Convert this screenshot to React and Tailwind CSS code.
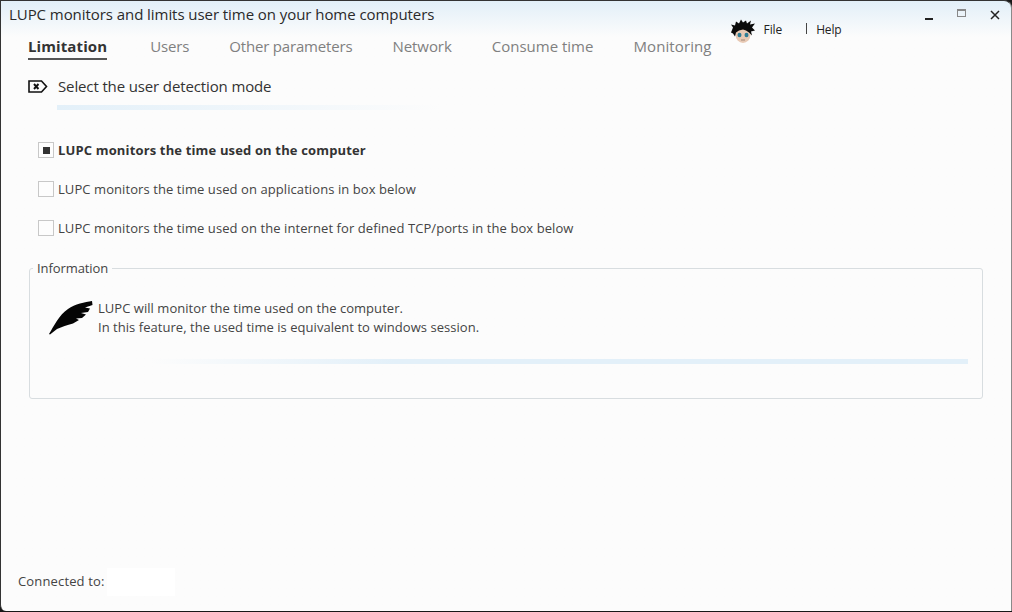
const tabs = [
  { label: 'Users', cls: 'ml-[43px] tracking-[-0.14px]' },
  { label: 'Other parameters', cls: 'ml-[40px] tracking-[-0.18px]' },
  { label: 'Network', cls: 'ml-[40px] tracking-[-0.05px]' },
  { label: 'Consume time', cls: 'ml-[40px] tracking-[0px]' },
  { label: 'Monitoring', cls: 'ml-[40px] tracking-[0.1px]' },
];

function Avatar() {
  return (
    <svg width="26" height="26" viewBox="0 0 26 25" className="shrink-0">
      <ellipse cx="13" cy="15" rx="7.5" ry="8.5" fill="#e8c9b4" />
      <path d="M1 13 L3 8 L1 5 L5 6 L6 2 L9 4 L11 0 L13 3 L16 1 L17 4 L21 1 L20 5 L25 4 L22 8 L25 11 L21 12 L22 16 L19 13 L16 11 L13 10 L9 11 L6 13 L5 17 L3 14 Z" fill="#0b0b0b" />
      <ellipse cx="9.5" cy="15.5" rx="2" ry="2.2" fill="#2f7d95" />
      <ellipse cx="16.5" cy="15.5" rx="2" ry="2.2" fill="#2f7d95" />
      <path d="M11 20.5 H15" stroke="#a08878" strokeWidth="1" />
    </svg>
  );
}

function TagIcon() {
  return (
    <svg width="20" height="13" viewBox="0 0 20 13" className="shrink-0">
      <path d="M1 1 H13.5 L18.5 6.5 L13.5 12 H1 Z" fill="none" stroke="#111" strokeWidth="1.6" />
      <path d="M6 4 L10.5 9 M10.5 4 L6 9" stroke="#111" strokeWidth="1.9" />
    </svg>
  );
}

function Feather() {
  return (
    <svg width="44" height="34" viewBox="0 0 44 34" className="mt-[2px] shrink-0">
      <path d="M0 33 C5 25 10 14 19 8 C26 3 36 1 43 0 L43.5 4 L36 6.5 L41 7.5 L39 11 L32 12 L37 13.5 L33 17 L27 17.5 L30 19 L24 22.5 C18 24 13 26 8 28 L1 33.5 Z" fill="#050505" />
    </svg>
  );
}

function Check({ checked }) {
  return (
    <div className="flex h-4 w-4 shrink-0 items-center justify-center border border-[#c8c8c8] bg-[#fdfdfd]">
      {checked && <div className="h-[7px] w-[7px] bg-[#333333]" />}
    </div>
  );
}

const options = [
  { label: 'LUPC monitors the time used on the computer', checked: true },
  { label: 'LUPC monitors the time used on applications in box below' },
  { label: 'LUPC monitors the time used on the internet for defined TCP/ports in the box below' },
];

export default function App() {
  return (
    <div className="h-[612px] w-[1012px] overflow-hidden bg-[#181818] font-['Open_Sans',sans-serif]">
      <div className="flex h-[611px] w-[1012px] flex-col rounded-tr-lg rounded-bl-md border-r border-[#8a8a8a] border-l border-l-[#333333] border-t border-t-[#333333] bg-[#fcfcfc] bg-gradient-to-b from-[#e2eff8] from-0% to-[#fcfcfc] to-[36px] bg-no-repeat">
        {/* Title bar */}
        <div className="flex h-[27px] items-center justify-between pl-2">
          <span className="text-[15px] leading-none tracking-[-0.06px] whitespace-nowrap text-[#2a2a2a]">
            LUPC monitors and limits user time on your home computers
          </span>
          <div className="flex items-center pr-[11px]">
            <div className="mt-[9px] h-[2px] w-[8px] bg-[#222222]" />
            <div className="mb-[4px] ml-[24px] h-[8px] w-[9px] border border-[#888888] border-t-2" />
            <svg width="10" height="10" viewBox="0 0 10 10" className="ml-[24px]">
              <path d="M1 1 L9 9 M9 1 L1 9" stroke="#222" strokeWidth="1.5" />
            </svg>
          </div>
        </div>

        {/* Tabs and menu */}
        <div className="flex h-[33px] items-start pl-[27px]">
          <div className="mt-[8px] flex items-start">
            <div className="border-b-2 border-[#555555] pb-[2px] text-[15px] leading-[20px] font-bold tracking-[0.1px] text-[#333333]">Limitation</div>
            {tabs.map((t) => (
              <div key={t.label} className={`${t.cls} text-[15px] leading-[20px] text-[#808080]`}>{t.label}</div>
            ))}
          </div>
          <div className="mt-[-9px] ml-[18px] flex items-center">
            <Avatar />
            <span className="mb-[5px] ml-[8px] text-[12px] tracking-[-0.1px] text-[#222222]">File</span>
            <div className="mb-[8px] ml-[24px] h-[11px] w-px bg-[#444444]" />
            <span className="mb-[5px] ml-[9px] text-[12px] tracking-[-0.15px] text-[#222222]">Help</span>
          </div>
        </div>

        {/* Section heading */}
        <div className="mt-[15px] flex items-center pl-[27px]">
          <TagIcon />
          <span className="ml-[10px] text-[15px] leading-[20px] tracking-[-0.13px] text-[#333333]">Select the user detection mode</span>
        </div>
        <div className="mt-[9px] ml-[56px] h-[5px] w-[385px] bg-gradient-to-r from-[#e3f0f9] to-[#fcfcfc]" />

        {/* Options */}
        <div className="mt-[31px] flex flex-col gap-[21px] pl-[37px]">
          {options.map((o) => (
            <div key={o.label} className="flex h-[18px] items-center gap-1">
              <Check checked={o.checked} />
              <span className={`text-[13px] leading-[18px] whitespace-nowrap ${o.checked ? 'font-bold tracking-[0.15px] text-[#333333]' : 'tracking-[0.08px] text-[#444444]'}`}>{o.label}</span>
            </div>
          ))}
        </div>

        {/* Information box */}
        <div className="relative mt-[31px] ml-[28px] h-[131px] w-[954px] rounded-[3px] border border-[#d8dde0] px-[19px] pt-[30px]">
          <span className="absolute top-[-10px] left-[3px] bg-[#fcfcfc] px-1 text-[13px] leading-[18px] tracking-[-0.08px] text-[#444444]">Information</span>
          <div className="flex items-start">
            <Feather />
            <div className="ml-[5px] text-[13px] leading-[19px] tracking-[0.04px] text-[#444444]">
              <div>LUPC will monitor the time used on the computer.</div>
              <div>In this feature, the used time is equivalent to windows session.</div>
            </div>
          </div>
          <div className="mt-[22px] ml-[100px] h-[5px] w-[819px] bg-gradient-to-r from-[#fcfcfc] to-[#e3f0f9] to-30%" />
        </div>

        {/* Status */}
        <div className="mt-auto mb-[15px] flex h-[28px] items-center pl-[17px]">
          <span className="text-[13px] tracking-[0.15px] text-[#444444]">Connected to:</span>
          <div className="ml-[2px] h-[28px] w-[68px] bg-white" />
        </div>
      </div>
    </div>
  );
}
